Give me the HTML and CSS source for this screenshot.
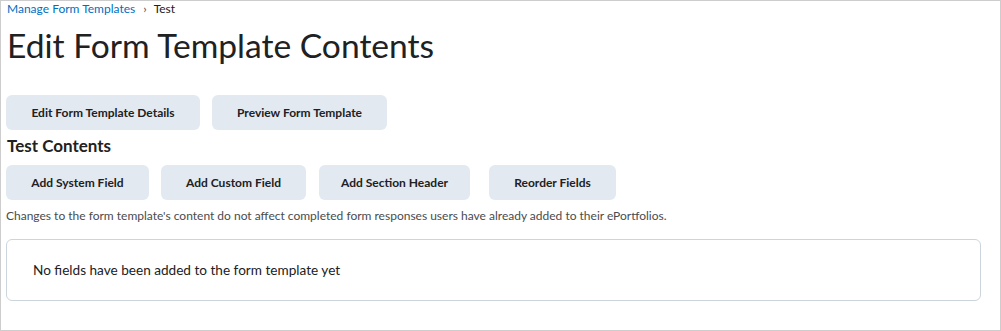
FILE: index.html
```html
<!DOCTYPE html>
<html>
<head>
<meta charset="utf-8">
<link rel="stylesheet" href="styles.css">
</head>
<body>
<div class="frame">
  <nav class="crumbs">
    <a class="crumb-link" href="#">Manage Form Templates</a>
    <span class="crumb-sep">›</span>
    <span class="crumb-current">Test</span>
  </nav>
  <h1 class="title">Edit Form Template Contents</h1>
  <div class="btn-row top-row">
    <button class="btn b-edit">Edit Form Template Details</button>
    <button class="btn b-preview">Preview Form Template</button>
  </div>
  <h2 class="section-title">Test Contents</h2>
  <div class="btn-row fields-row">
    <button class="btn b-sys">Add System Field</button>
    <button class="btn b-custom">Add Custom Field</button>
    <button class="btn b-section">Add Section Header</button>
    <button class="btn b-reorder">Reorder Fields</button>
  </div>
  <p class="note">Changes to the form template's content do not affect completed form responses users have already added to their ePortfolios.</p>
  <div class="empty-box">No fields have been added to the form template yet</div>
</div>
</body>
</html>
```
FILE: styles.css
```css
html, body {
  margin: 0;
  padding: 0;
  background: #fff;
}
.frame {
  box-sizing: border-box;
  width: 1001px;
  height: 331px;
  border: 1px solid #cdcdcd;
  padding: 0 20px 0 5px;
  font-family: Lato, "Noto Sans", sans-serif;
  color: #202122;
}
.crumbs {
  display: flex;
  align-items: center;
  height: 16px;
  font-size: 12px;
  line-height: 16px;
  padding-left: 1px;
}
.crumb-link {
  color: #006fbf;
  text-decoration: none;
}
.crumb-sep {
  margin: 0 7px 0 8px;
  color: #494c4e;
  font-size: 12px;
}
.crumb-current {
  color: #202122;
}
.title {
  margin: 6px 0 0 1px;
  font-size: 33.6px;
  font-weight: 400;
  line-height: 44px;
  height: 44px;
}
.btn-row {
  display: flex;
}
.top-row {
  margin-top: 28px;
  gap: 12px;
}
.btn {
  height: 35px;
  border: none;
  border-radius: 6px;
  background: #e3e9f1;
  color: #202122;
  font-family: Lato, "Noto Sans", sans-serif;
  font-size: 12px;
  font-weight: 700;
  padding: 0;
  white-space: nowrap;
  cursor: pointer;
}
.b-edit { width: 194px; }
.b-preview { width: 175px; }
.section-title {
  margin: 4px 0 0 1px;
  font-size: 17px;
  font-weight: 700;
  line-height: 23px;
}
.fields-row {
  margin-top: 8px;
}
.b-sys { width: 143px; }
.b-custom { width: 145px; margin-left: 12px; }
.b-section { width: 151px; margin-left: 13px; }
.b-reorder { width: 127px; margin-left: 19px; }
.note {
  margin: 8px 0 0 0;
  font-size: 12px;
  line-height: 16px;
  color: #494c4e;
}
.empty-box {
  box-sizing: border-box;
  margin-top: 15px;
  width: 975px;
  height: 62px;
  border: 1px solid #cdd5dc;
  border-radius: 6px;
  padding: 0 0 0 26px;
  display: flex;
  align-items: center;
  font-size: 13.6px;
  color: #202122;
}
```
